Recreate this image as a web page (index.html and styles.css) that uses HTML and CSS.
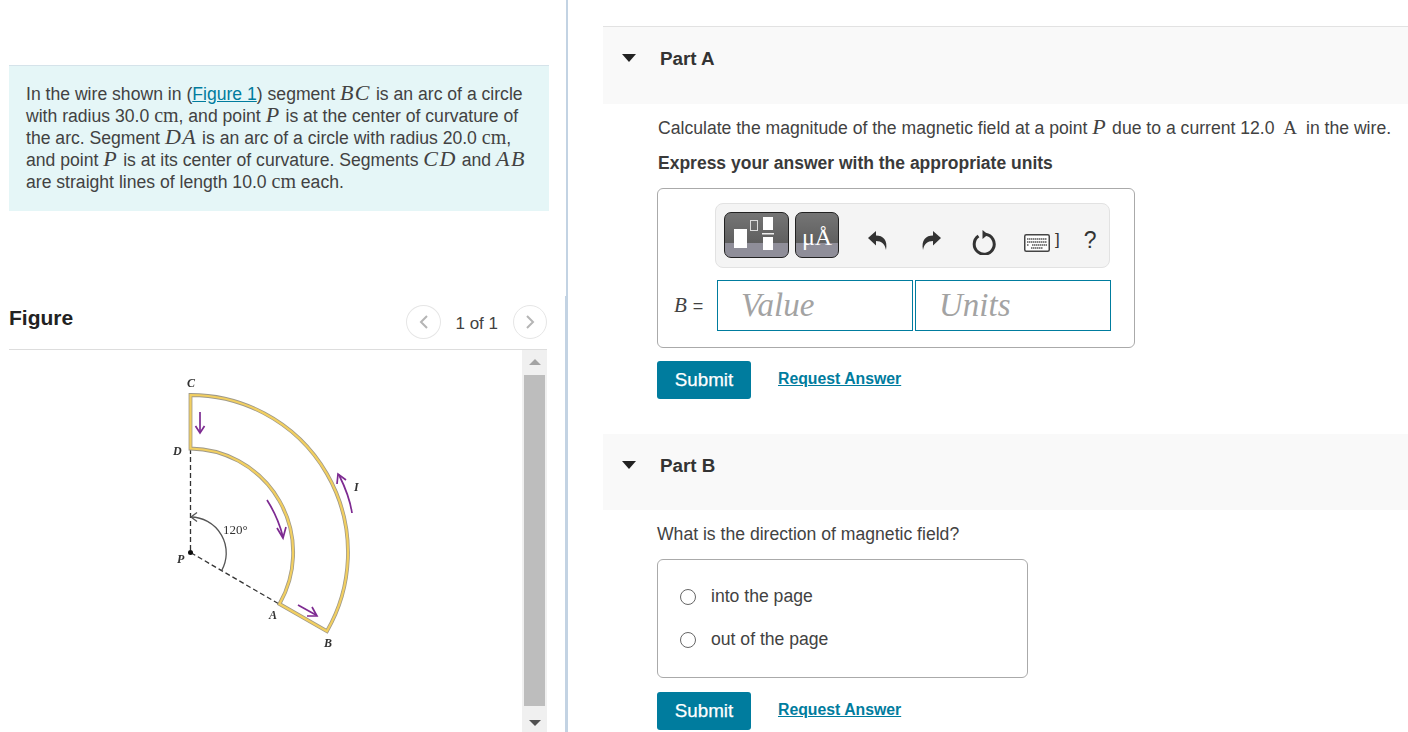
FILE: index.html
```html
<!DOCTYPE html>
<html lang="en">
  <head>
    <meta charset="UTF-8" />
    <meta name="viewport" content="width=device-width, initial-scale=1.0" />
    <title>Magnetic field of a wire</title>
    <link rel="stylesheet" href="styles.css">
  </head>
  <body>
    <div class="left">
      <div class="intro">
        <div>In the wire shown in (<a href="#figure">Figure 1</a>) segment <span class="mi">BC</span> is an arc of a circle</div>
        <div>with radius 30.0 <span class="mr">cm</span>, and point <span class="mi">P</span> is at the center of curvature of</div>
        <div>the arc. Segment <span class="mi">DA</span> is an arc of a circle with radius 20.0 <span class="mr">cm</span>,</div>
        <div>and point <span class="mi">P</span> is at its center of curvature. Segments <span class="mi">CD</span> and <span class="mi">AB</span></div>
        <div>are straight lines of length 10.0 <span class="mr">cm</span> each.</div>
      </div>
      <div class="figure" id="figure">
        <div class="figure-head">
          <h2>Figure</h2>
          <div class="pager">
            <span class="page-btn">
              <svg width="10" height="16" viewBox="0 0 10 16"><path d="M8 2 L2 8 L8 14" /></svg>
            </span>
            <span class="page-count">1 of 1</span>
            <span class="page-btn">
              <svg width="10" height="16" viewBox="0 0 10 16"><path d="M2 2 L8 8 L2 14" /></svg>
            </span>
          </div>
        </div>
        <div class="figure-body">
          <div class="figure-img">
            <svg width="220" height="290" viewBox="150 370 220 290">
              <defs>
                <filter id="soft"><feGaussianBlur stdDeviation="0.4" /></filter>
              </defs>
              <g filter="url(#soft)">
                <path class="dash" d="M190.500 449 V552.500 L279 604" />
                <path class="angle" d="M191 517 A36 36 0 0 1 221.700 570.500" />
                <path class="angle-tip" d="M197 512.500 L191 517 L197 521.500" />
                <circle cx="190.500" cy="552.500" r="2.500" fill="#111" />
                <path class="wire-edge" d="M190.500 395 A157.500 157.500 0 0 1 326.900 631.200 L279.500 604 A104 104 0 0 0 190.500 448.500 Z" />
                <path class="wire-fill" d="M190.500 395 A157.500 157.500 0 0 1 326.900 631.200 L279.500 604 A104 104 0 0 0 190.500 448.500 Z" />
                <path class="current" d="M200 412 V432" />
                <path class="current-tip" d="M195.500 426 L200 433 L204.500 426" />
                <path class="current" d="M267 500 C274 511 279 521 283 537" />
                <path class="current-tip" d="M277 528 L283 538 L286 527" />
                <path class="current" d="M298 605 L316 615" />
                <path class="current-tip" d="M307 616 L317 616 L312 607" />
                <path class="current" d="M352 513 C350 499 345 487 339 475" />
                <path class="current-tip" d="M337 484 L338 474 L346 480" />
              </g>
              <g class="labels" filter="url(#soft)">
                <text x="187" y="387">C</text>
                <text x="173" y="455">D</text>
                <text x="177" y="563">P</text>
                <text x="269" y="619">A</text>
                <text x="324" y="647">B</text>
                <text x="354" y="491">I</text>
                <text class="deg" x="223" y="534">120°</text>
              </g>
            </svg>
          </div>
          <div class="scrollbar">
            <span class="sb-up"></span>
            <span class="sb-thumb"></span>
            <span class="sb-down"></span>
          </div>
        </div>
      </div>
    </div>

    <div class="right">
      <div class="part-head">
        <span class="caret"></span>
        <h3>Part A</h3>
      </div>
      <div class="part-body part-a-body">
        <p class="question">Calculate the magnitude of the magnetic field at a point <span class="mi">P</span> due to a current 12.0 <span class="mr amp">A</span> in the wire.</p>
        <p class="instruct">Express your answer with the appropriate units</p>
        <div class="answer-box">
          <div class="toolbar">
            <button class="tool tool-tmpl">
              <svg width="63" height="44" viewBox="0 0 63 44">
                <rect x="9" y="16" width="13" height="19" fill="#fff" />
                <rect x="25.500" y="7.500" width="7" height="10" fill="none" stroke="#ddd" />
                <rect x="38" y="4" width="10" height="13" fill="#fff" />
                <rect x="37" y="20" width="12" height="1.500" fill="#eee" />
                <rect x="38" y="24" width="10" height="13" fill="#fff" />
              </svg>
            </button>
            <button class="tool tool-unit">μÅ</button>
            <svg class="icon icon-undo" width="24" height="24" viewBox="0 0 24 24"><path d="M2 9 L10 2 V6.500 C17 6.500 22 11 20 21 C19 15 15.500 12 10 12 V16.500 Z" /></svg>
            <svg class="icon" width="24" height="24" viewBox="0 0 24 24"><path d="M22 9 L14 2 V6.500 C7 6.500 2 11 4 21 C5 15 8.500 12 14 12 V16.500 Z" /></svg>
            <svg class="icon" width="24" height="26" viewBox="0 0 24 26">
              <path class="reset" d="M6.500 7 A10 10 0 1 0 13.500 5.300" />
              <path d="M10.500 1 L16 5.500 L10.500 10 Z" />
            </svg>
            <svg class="icon-kbd" width="26" height="18" viewBox="0 0 26 18">
              <rect x="0.750" y="0.750" width="24.500" height="16.500" rx="1.500" fill="#fff" stroke="#444" stroke-width="1.500" />
              <path class="keys" d="M3 5 H23 M3 8 H23 M3 11 H5 M7 14 H19 M8 11 H23" />
            </svg>
            <span class="bracket">]</span>
            <span class="help">?</span>
          </div>
          <div class="value-row">
            <span class="var-label"><span class="var">B</span> =</span>
            <input class="val-input" type="text" placeholder="Value" />
            <input class="val-input" type="text" placeholder="Units" />
          </div>
        </div>
        <div class="actions">
          <button class="submit">Submit</button>
          <a class="request" href="#a">Request Answer</a>
        </div>
      </div>

      <div class="part-head part-b">
        <span class="caret"></span>
        <h3>Part B</h3>
      </div>
      <div class="part-body">
        <p class="question">What is the direction of magnetic field?</p>
        <div class="options">
          <label class="option"><input type="radio" name="dir" /> into the page</label>
          <label class="option"><input type="radio" name="dir" /> out of the page</label>
        </div>
        <div class="actions actions-b">
          <button class="submit">Submit</button>
          <a class="request" href="#b">Request Answer</a>
        </div>
      </div>
    </div>
  </body>
</html>
```

FILE: styles.css
```css
html, body {
  height: 732px;
  overflow: hidden;
}
body {
  font-family: "Liberation Sans", Arial, sans-serif;
  font-size: 17.6px;
  color: #424242;
  background: #fff;
  margin: 0;
  display: flex;
}
.mi {
  font-family: "Liberation Serif", serif;
  font-style: italic;
  font-size: 22px;
  line-height: 0;
  letter-spacing: 1.5px;
}
.mr {
  font-family: "Liberation Serif", serif;
  font-size: 20px;
  line-height: 0;
}

/* left column */
.left {
  width: 566px;
  height: 732px;
  flex: none;
  border-right: 2px solid #c3d3e3;
}
.intro {
  width: 506px;
  margin: 65px 0 0 9px;
  padding: 17px 17px 17px;
  height: 111px;
  background: #e5f6f7;
  border-top: 1px solid #d5e3ea;
  line-height: 22px;
}
.intro a {
  color: #007c9e;
}
.figure {
  margin-top: 85px;
  padding: 0 18px 0 9px;
  height: 436px;
  border-right: 1px solid #c3d3e3;
}
.figure-head {
  height: 53px;
  border-bottom: 1px solid #ddd;
  display: flex;
  justify-content: space-between;
}
.figure-head h2 {
  margin: 10px 0 0;
  font-size: 21px;
  line-height: 24px;
  color: #222;
}
.pager {
  display: flex;
  align-items: center;
  height: 34px;
  margin-top: 9px;
}
.page-btn {
  width: 32px;
  height: 32px;
  border: 1px solid #e6e6e6;
  border-radius: 50%;
  display: flex;
  align-items: center;
  justify-content: center;
}
.page-btn:first-child {
  width: 33px;
}
.page-btn path {
  fill: none;
  stroke: #b5b5b5;
  stroke-width: 2;
}
.page-count {
  margin: 3px 15px 0 14px;
  font-size: 17px;
}
.figure-body {
  display: flex;
  justify-content: space-between;
  height: 382px;
}
.figure-img {
  padding: 20px 0 0 141px;
}
.dash {
  fill: none;
  stroke: #333;
  stroke-width: 1.3;
  stroke-dasharray: 5 3;
}
.angle, .angle-tip {
  fill: none;
  stroke: #555;
  stroke-width: 1.3;
}
.wire-edge {
  fill: none;
  stroke: #a09a88;
  stroke-width: 3.8;
}
.wire-fill {
  fill: none;
  stroke: #f2cf60;
  stroke-width: 2.2;
}
.current, .current-tip {
  fill: none;
  stroke: #7d2a91;
  stroke-width: 1.7;
}
.labels text {
  font-family: "Liberation Serif", serif;
  font-style: italic;
  font-weight: bold;
  font-size: 12px;
  fill: #333;
}
.labels .deg {
  font-style: normal;
  font-weight: normal;
  font-size: 13px;
}
.scrollbar {
  width: 25px;
  background: #f0f0f0;
  display: flex;
  flex-direction: column;
  align-items: center;
}
.sb-up {
  margin-top: 9px;
  border: 6px solid transparent;
  border-top: 0;
  border-bottom-color: #a3a3a3;
}
.sb-thumb {
  width: 21px;
  height: 331px;
  margin-top: 10px;
  background: #bdbdbd;
}
.sb-down {
  margin-top: 14px;
  border: 6px solid transparent;
  border-bottom: 0;
  border-top-color: #505050;
}

/* right column */
.right {
  flex: 1;
  padding: 26px 0 0 35px;
}
.part-head {
  height: 77px;
  background: #f9f9f9;
  border-top: 1px solid #e2e2e2;
  display: flex;
  align-items: flex-start;
  padding-left: 19px;
}
.part-head h3 {
  margin: 21px 0 0 24px;
  font-size: 18.8px;
  line-height: 22px;
  color: #333;
}
.caret {
  margin-top: 27px;
  border: 7px solid transparent;
  border-bottom: 0;
  border-top: 8px solid #222;
}
.part-b {
  margin-top: 35px;
  border-top: 0;
  height: 76px;
}
.part-body {
  margin-left: 54px;
}
.question, .instruct {
  margin: 0;
  padding-top: 13px;
  line-height: 22px;
}
.part-a-body .question, .part-a-body .instruct {
  padding-left: 1px;
}
.instruct {
  font-weight: bold;
  font-size: 17.5px;
  color: #3a3a3a;
}
.amp {
  margin: 0 4px;
  font-size: 19px;
}
.answer-box {
  width: 476px;
  height: 158px;
  margin-top: 14px;
  border: 1px solid #aaa;
  border-radius: 6px;
}
.toolbar {
  width: 393px;
  height: 63px;
  margin: 14px 0 0 57px;
  background: #f4f4f4;
  border: 1px solid #e2e2e2;
  border-radius: 8px;
  display: flex;
  align-items: flex-start;
}
.tool {
  height: 46px;
  margin-top: 8px;
  padding: 0;
  border: 1px solid #222;
  border-radius: 7px;
  color: #fff;
  background: linear-gradient(#757575, #5f5f5f 68%, #8f8e99 68%);
}
.tool-tmpl {
  width: 65px;
  margin-left: 8px;
}
.tool-tmpl svg {
  display: block;
}
.tool-unit {
  width: 44px;
  margin-left: 6px;
  padding-top: 3px;
  font-family: "Liberation Serif", serif;
  font-size: 24px;
  line-height: 40px;
}
.icon {
  margin: 25px 0 0 29px;
}
.icon path {
  fill: #333;
}
.icon-undo {
  margin-left: 27px;
}
.icon .reset {
  fill: none;
  stroke: #333;
  stroke-width: 3;
}
.icon-kbd {
  margin: 30px 0 0 28px;
}
.keys {
  fill: none;
  stroke: #555;
  stroke-width: 1.6;
  stroke-dasharray: 1.500 0.500;
}
.bracket {
  margin: 26px 0 0 5px;
  font-size: 17px;
  color: #333;
}
.help {
  margin: 23px 0 0 24px;
  font-size: 23px;
  color: #333;
}
.value-row {
  display: flex;
  align-items: center;
  margin-top: 12px;
}
.var-label {
  width: 59px;
  padding-left: 16px;
  box-sizing: border-box;
  font-size: 18px;
  word-spacing: 1px;
}
.var {
  font-family: "Liberation Serif", serif;
  font-style: italic;
  font-size: 21px;
}
.val-input {
  width: 196px;
  height: 51px;
  box-sizing: border-box;
  margin: 0 2px 0 0;
  padding: 0 23px;
  border: 1px solid #007c9e;
  border-radius: 0;
  outline: 0;
  font-family: "Liberation Serif", serif;
  font-style: italic;
  font-size: 33px;
}
.val-input::placeholder {
  color: #a3a3a3;
  opacity: 1;
}
.actions {
  display: flex;
  align-items: center;
  margin-top: 13px;
}
.actions-b {
  margin-top: 14px;
}
.submit {
  width: 94px;
  height: 38px;
  padding: 0;
  background: #007c9e;
  color: #fff;
  border: 0;
  border-radius: 3px;
  font-family: "Liberation Sans", Arial, sans-serif;
  font-size: 18.8px;
  font-weight: 500;
  -webkit-text-stroke: 0.25px #fff;
}
.request {
  margin: -2px 0 0 27px;
  color: #007c9e;
  font-size: 15.8px;
  font-weight: bold;
}
.options {
  width: 369px;
  height: 117px;
  margin-top: 14px;
  border: 1px solid #aaa;
  border-radius: 6px;
}
.option {
  display: flex;
  align-items: center;
  height: 43px;
  padding-left: 22px;
}
.options .option:first-child {
  margin-top: 15px;
}
.option input {
  appearance: none;
  width: 16px;
  height: 16px;
  margin: 0 15px 0 0;
  border: 1.5px solid #666;
  border-radius: 50%;
}
```
